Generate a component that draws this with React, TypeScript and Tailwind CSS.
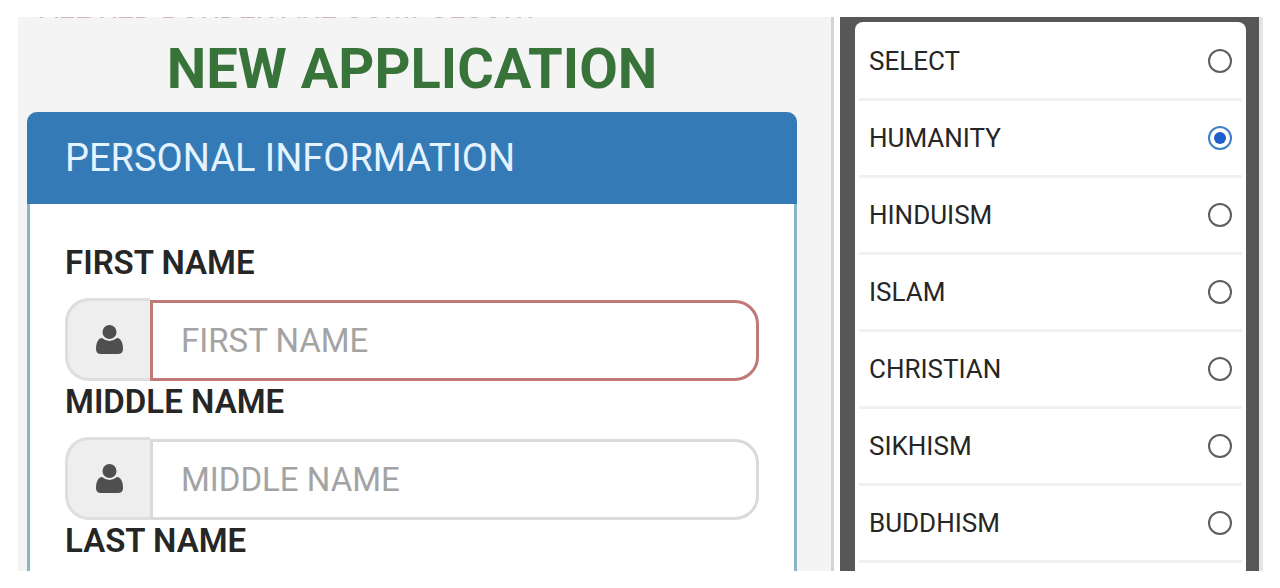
const religions = ['SELECT', 'HUMANITY', 'HINDUISM', 'ISLAM', 'CHRISTIAN', 'SIKHISM', 'BUDDHISM'];

function UserIcon() {
  return (
    <svg viewBox="0 0 27 30" className="h-[30px] w-[27px] fill-[#4f4f4f]" aria-hidden="true">
      <circle cx="13.5" cy="7" r="7" />
      <path d="M6 13Q13.500 19 21 13C25 13.500 27 18 27 24Q27 29 22 29H5Q0 29 0 24C0 18 2 13.500 6 13Z" />
    </svg>
  );
}

function NameField({ id, label, invalid = false }: { id: string; label: string; invalid?: boolean }) {
  return (
    <div>
      <label htmlFor={id} className="block text-[33px] leading-[38px] font-semibold">
        {label}
      </label>
      <div className="mt-4 flex h-[85px] pb-[2px]">
        <span className="flex w-[85px] items-center justify-center rounded-l-[24px] border-[3px] border-r-0 border-[#dedede] bg-[#eeeeee]">
          <UserIcon />
        </span>
        <input
          id={id}
          type="text"
          placeholder={label}
          className={
            'mt-[2px] min-w-0 flex-1 rounded-r-[24px] border-[3px] bg-white px-7 text-[33px] outline-none placeholder:text-[#a3a3a3] ' +
            (invalid ? 'border-[#bf7a77]' : 'border-[#dadada]')
          }
        />
      </div>
    </div>
  );
}

function ApplicationForm() {
  return (
    <section className="overflow-hidden border-r-[3px] border-[#d4d4d4] bg-[#f4f4f4] pr-[34px] pl-[9px]">
      {/* Notice is scrolled almost out of view */}
      <p className="-mt-[25px] pl-3 text-[30px] leading-8 whitespace-nowrap text-[#cfb4b4]">
        ALL RED BORDER ARE COMPULSORY
      </p>
      <h1 className="pt-[13px] pb-[11px] text-center text-[56px] leading-[64px] font-bold text-[#38743a]">
        NEW APPLICATION
      </h1>
      <form className="rounded-t-[10px] border-x-[3px] border-[#8db3c9] bg-white">
        <h2 className="-mx-[3px] rounded-t-[10px] bg-[#337ab7] px-[38px] text-[38px] leading-[92px] text-[#e4f3ff]">
          PERSONAL INFORMATION
        </h2>
        <div className="px-[35px] pt-10 pb-[11px]">
          <NameField id="first-name" label="FIRST NAME" invalid />
          <NameField id="middle-name" label="MIDDLE NAME" />
          <p className="text-[33px] leading-[38px] font-semibold">LAST NAME</p>
        </div>
      </form>
    </section>
  );
}

function ReligionPicker() {
  return (
    <section className="overflow-hidden border-r-[4px] border-[#e4e4e4] bg-[#575757] pt-[5px] pr-[13px] pl-[15px]">
      <fieldset className="h-full rounded-t-[8px] bg-white px-1 pt-[2px]">
        {religions.map((name) => (
          <label
            key={name}
            className="flex h-[77px] items-center justify-between border-b-[3px] border-[#f1f1f1] px-[10px] text-[26px]"
          >
            {name}
            <input
              type="radio"
              name="religion"
              defaultChecked={name === 'HUMANITY'}
              className="size-6 appearance-none rounded-full border-2 border-[#5e5e5e] bg-white checked:border-[#3f7fc4] checked:bg-[#1f5fcc] checked:bg-clip-content checked:p-1"
            />
          </label>
        ))}
      </fieldset>
    </section>
  );
}

export default function App() {
  return (
    <main className="grid grid-cols-[816fr_423fr] gap-[6px] bg-white py-[17px] pr-[17px] pl-[18px] font-['Roboto',sans-serif] text-[#262626]">
      <ApplicationForm />
      <ReligionPicker />
    </main>
  );
}
